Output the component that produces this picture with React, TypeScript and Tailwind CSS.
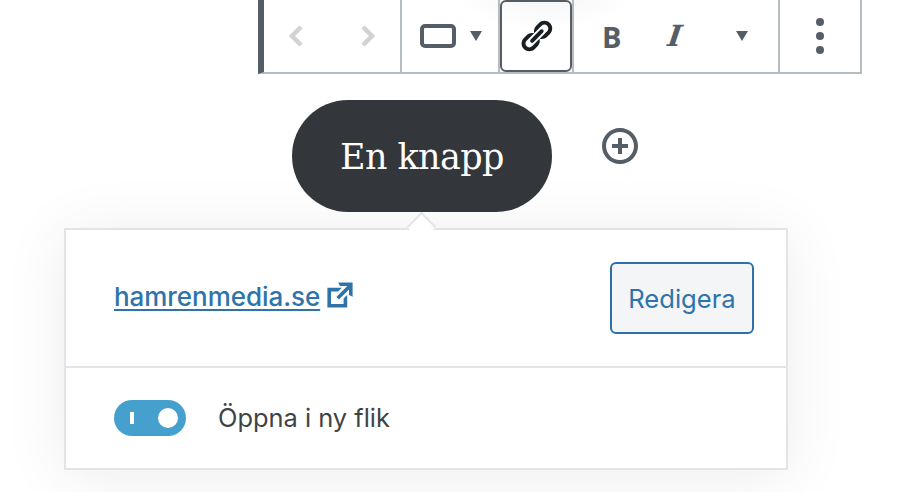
const ui = "font-['Inter','Liberation_Sans',sans-serif]";

function Triangle() {
  return (
    <svg width="12" height="10" viewBox="0 0 12 10" className="block">
      <path d="M0 0h12L6 10z" fill="#555d66" />
    </svg>
  );
}

function Icon({ d, size = 36, color = "#555d66" }: { d: string; size?: number; color?: string }) {
  return (
    <svg width={size} height={size} viewBox="0 0 20 20" className="block shrink-0">
      <path d={d} fill={color} />
    </svg>
  );
}

const LINK =
  "M17.74 2.76c1.68 1.69 1.68 4.41 0 6.1l-1.53 1.52c-1.12 1.12-2.7 1.47-4.14 1.09l2.62-2.61.76-.77.76-.76c.84-.84.84-2.2 0-3.04-.84-.85-2.2-.85-3.04 0l-.77.76-3.38 3.38c-.37-1.44-.02-3.02 1.1-4.14l1.52-1.53c1.69-1.68 4.42-1.68 6.1 0zM8.59 13.43l5.34-5.34c.42-.42.42-1.1 0-1.52-.44-.43-1.13-.39-1.53 0l-5.33 5.34c-.42.42-.42 1.1 0 1.52.44.43 1.13.39 1.52 0zm-.76 2.29l4.14-4.15c.38 1.44.03 3.02-1.09 4.14l-1.52 1.53c-1.69 1.68-4.41 1.68-6.1 0-1.68-1.68-1.68-4.42 0-6.1l1.53-1.52c1.12-1.12 2.7-1.47 4.14-1.1l-4.14 4.15c-.85.84-.85 2.2 0 3.05.84.84 2.2.84 3.04 0z";
const EXTERNAL =
  "M9 3h8v8l-2-1V6.92l-5.6 5.59-1.41-1.41L14.08 5H10zm3 12v-3l2-2v7H3V6h8L9 8H5v7h7z";
const INSERT =
  "M10 1c-5 0-9 4-9 9s4 9 9 9 9-4 9-9-4-9-9-9zm0 16c-3.9 0-7-3.1-7-7s3.1-7 7-7 7 3.1 7 7-3.1 7-7 7zm1-11H9v3H6v2h3v3h2v-3h3V9h-3V6z";

export default function App() {
  return (
    <div className="w-[914px] h-[492px] overflow-hidden bg-white bg-[radial-gradient(ellipse_85px_35px_at_545px_-5px,#f5f5f5,#ffffff)] relative">
      {/* Block toolbar */}
      <div className="relative z-10 ml-[258px] w-[604px] h-[74px] flex border-l-[6px] border-l-[#555d66] border-b-2 border-b-[#b5bcc2] border-r-2 border-r-[#b5bcc2]">
        <div className="w-[138px] flex items-center border-r-2 border-[#b5bcc2]">
          <svg width="14" height="22" viewBox="0 0 14 22" fill="none" className="ml-[25px]">
            <path d="M12 2L3 11l9 9" stroke="#d0d2d4" strokeWidth="4.5" />
          </svg>
          <svg width="14" height="22" viewBox="0 0 14 22" fill="none" className="ml-[58px]">
            <path d="M2 2l9 9-9 9" stroke="#d0d2d4" strokeWidth="4.5" />
          </svg>
        </div>
        <div className="w-[98px] flex items-center border-r-2 border-[#b5bcc2]">
          <div className="ml-[18px] w-[36px] h-[24px] rounded-[5px] border-4 border-[#555d66]" />
          <div className="ml-[14px]"><Triangle /></div>
        </div>
        <div className="w-[72px] h-[72px] border-2 border-[#555d66] rounded-[6px] flex items-center justify-center shrink-0">
          <Icon d={LINK} color="#191e23" />
        </div>
        <div className="w-[208px] flex items-center border-l-2 border-r-2 border-[#b5bcc2] relative">
          <span className="w-[16px] ml-[28px] text-[29px] leading-none font-bold text-[#555d66] font-['Open_Sans',sans-serif]">B</span>
          <span className="w-[20px] ml-[50px] text-[29px] leading-none font-bold italic -skew-x-[8deg] text-[#555d66] font-['DejaVu_Serif',serif]">I</span>
          <div className="ml-[48px]"><Triangle /></div>
        </div>
        <div className="flex-1 flex flex-col items-center justify-center gap-[6px]">
          <div className="w-[8px] h-[8px] rounded-full bg-[#555d66]" />
          <div className="w-[8px] h-[8px] rounded-full bg-[#555d66]" />
          <div className="w-[8px] h-[8px] rounded-full bg-[#555d66]" />
        </div>
      </div>

      {/* Button row */}
      <div className="relative z-10 mt-[26px] ml-[292px] flex items-center">
        <div className="w-[260px] h-[112px] pt-[3px] rounded-[56px] bg-[#33373c] text-white flex items-center justify-center text-[35px] tracking-[-0.6px] font-['DejaVu_Serif',serif]">
          En knapp
        </div>
        <div className="ml-[48px] -mt-[20px]"><Icon d={INSERT} size={40} /></div>
      </div>

      {/* Link popover */}
      <div className={`relative mt-[16px] ml-[64px] w-[724px] h-[242px] bg-white border-2 border-[#e2e4e7] shadow-[0_6px_60px_rgba(25,30,35,0.08)] ${ui}`}>
        <div className="absolute -top-[14px] left-[345px] w-[21px] h-[21px] rotate-45 bg-white border-t-2 border-l-2 border-[#e2e4e7]" />
        <div className="relative h-[136px] flex items-center justify-between pl-[48px] pr-[32px]">
          <div className="flex items-center -mt-[4px]">
            <span className="text-[26px] font-medium tracking-[-0.05px] text-[#2e74aa] underline decoration-2 underline-offset-[3px]">hamrenmedia.se</span>
            <span className="ml-[2px] -mt-[2px]"><Icon d={EXTERNAL} color="#2e74aa" /></span>
          </div>
          <div className="w-[144px] h-[72px] pt-[2px] rounded-[6px] border-2 border-[#2e71a8] bg-[#f3f5f6] text-[#2e74aa] text-[25.6px] flex items-center justify-center">
            Redigera
          </div>
        </div>
        <div className="h-[100px] border-t-2 border-[#e2e4e7] flex items-center pl-[48px] pt-[2px]">
          <div className="relative w-[72px] h-[36px] rounded-[18px] bg-[#45a0cd] flex items-center shrink-0">
            <div className="ml-[16px] w-[4px] h-[12px] bg-white" />
            <div className="ml-[24px] w-[20px] h-[20px] rounded-full bg-white" />
          </div>
          <span className="ml-[32px] text-[25.4px] text-[#3f4347]">Öppna i ny flik</span>
        </div>
      </div>
    </div>
  );
}
